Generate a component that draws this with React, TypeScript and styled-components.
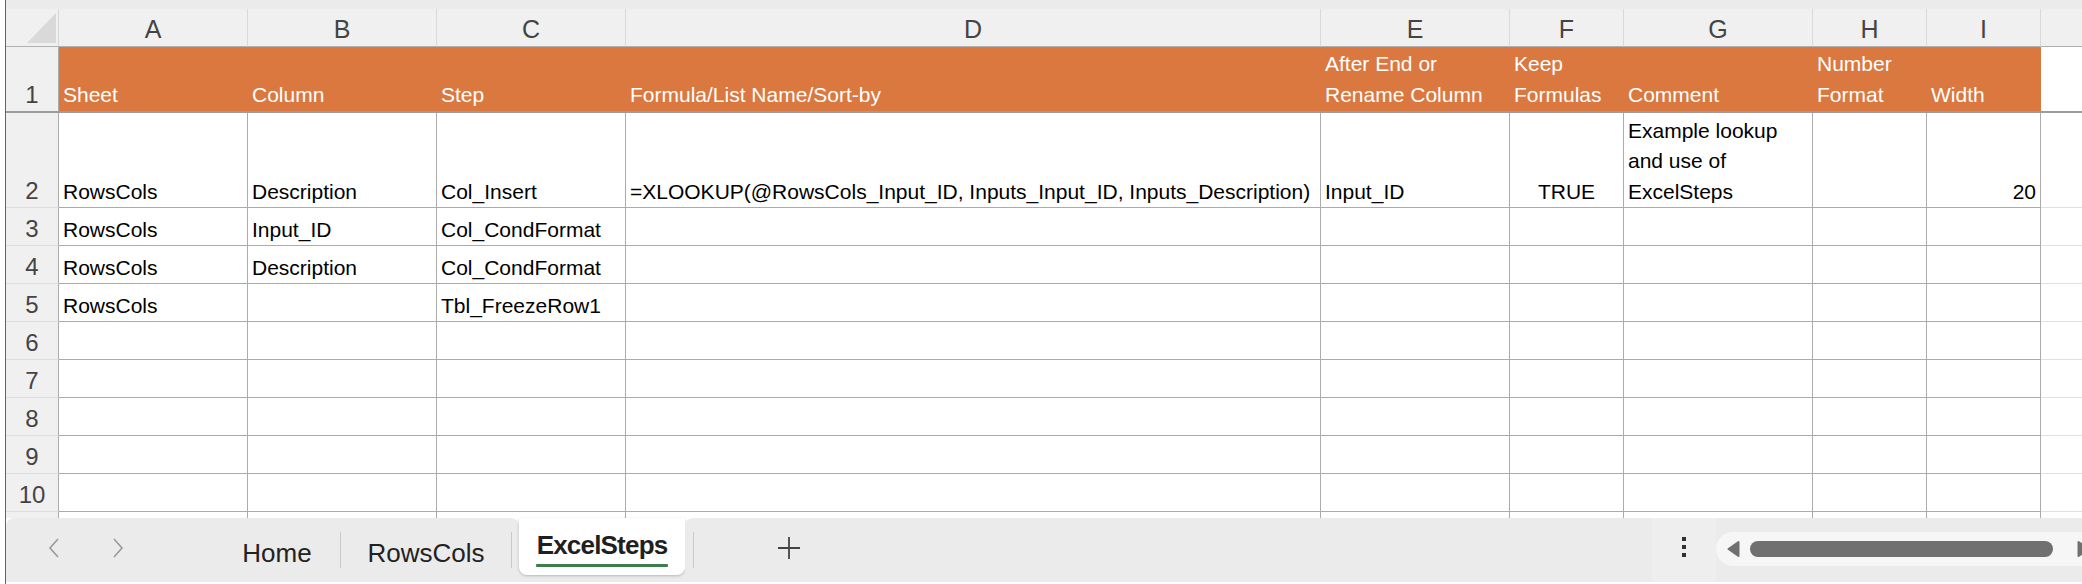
import React from 'react';
import styled, { createGlobalStyle } from 'styled-components';

const GlobalStyle = createGlobalStyle`
  *, *::before, *::after { box-sizing: border-box; }
  html, body { margin: 0; padding: 0; background: #ffffff; }
  body {
    width: 2082px;
    height: 584px;
    overflow: hidden;
    font-family: "Liberation Sans", Arial, sans-serif;
  }
`;

const COLS = '53px 189px 189px 189px 695px 189px 114px 189px 114px 114px 1fr';
const GRID = '#ababab';
const ORANGE = '#db7840';
const HEAD_BG = '#f0f0f0';

const Page = styled.div`
  display: flex;
  width: 2082px;
  height: 584px;
  overflow: hidden;
  background: #ffffff;
`;

const EdgeStrip = styled.div`
  flex: 0 0 6px;
  border-right: 1px solid #3b7d4a;
  background: #ffffff;
`;

const Workbook = styled.div`
  flex: 1;
  min-width: 0;
  display: flex;
  flex-direction: column;
`;

const TopBand = styled.div`
  height: 9px;
  background: #ebebeb;
`;

const GridRow = styled.div<{ $h: number }>`
  display: grid;
  grid-template-columns: ${COLS};
  height: ${(p) => p.$h}px;
`;

const FreezeLine = styled.div`
  height: 2px;
  background: #9c9c9c;
`;

const CornerCell = styled.div`
  background: ${HEAD_BG};
  border-right: 1px solid #d6d6d6;
  border-bottom: 1px solid #b0b0b0;
  display: flex;
  justify-content: flex-end;
  align-items: flex-end;
  padding: 0 2px 3px 0;
`;

const SelectAll = styled.div`
  width: 29px;
  height: 30px;
  background: #d9d9d9;
  clip-path: polygon(100% 0, 100% 100%, 0 100%);
`;

const ColHead = styled.div<{ $last?: boolean }>`
  background: ${HEAD_BG};
  border-bottom: 1px solid #b0b0b0;
  border-right: ${(p) => (p.$last ? 'none' : '1px solid #d9d9d9')};
  display: flex;
  justify-content: center;
  align-items: flex-start;
  padding-top: 4px;
  font: 25px/33px "Liberation Sans", Arial, sans-serif;
  color: #444444;
`;

const RowHead = styled.div<{ $plain?: boolean }>`
  background: ${HEAD_BG};
  border-right: 1px solid ${GRID};
  border-bottom: ${(p) => (p.$plain ? 'none' : '1px solid #dedede')};
  display: flex;
  justify-content: center;
  align-items: flex-end;
  padding-bottom: 1px;
  font: 24px/30px "Liberation Sans", Arial, sans-serif;
  color: #444444;
`;

type Align = 'left' | 'center' | 'right';
const flexAlign = (a?: Align) => (a === 'center' ? 'center' : a === 'right' ? 'flex-end' : 'flex-start');

const Cell = styled.div<{ $align?: Align; $open?: boolean }>`
  background: #ffffff;
  border-right: 1px solid ${GRID};
  border-bottom: ${(p) => (p.$open ? 'none' : `1px solid ${GRID}`)};
  display: flex;
  flex-direction: column;
  justify-content: flex-end;
  align-items: ${(p) => flexAlign(p.$align)};
  padding: 0 4px;
  font: 21px/30.5px "Liberation Sans", Arial, sans-serif;
  color: #000000;
  white-space: nowrap;
`;

const HeadCell = styled.div`
  background: ${ORANGE};
  display: flex;
  flex-direction: column;
  justify-content: flex-end;
  padding: 0 4px 1px;
  font: 21px/31px "Liberation Sans", Arial, sans-serif;
  color: #ffffff;
  white-space: nowrap;
`;

const FillerCell = styled.div<{ $border?: boolean }>`
  background: #ffffff;
  border-bottom: ${(p) => (p.$border ? '1px solid #e0e0e0' : 'none')};
`;

/* ---------- sheet tabs ---------- */

const TabBar = styled.div`
  display: flex;
  height: 64px;
  background: #ffffff;
`;

const LeftSection = styled.div`
  flex: 0 0 513px;
  display: flex;
  align-items: stretch;
  background: #ebebeb;
  border-radius: 8px 8px 0 0;
  padding-left: 28px;
`;

const NavButton = styled.div<{ $gap?: number }>`
  width: 40px;
  display: flex;
  align-items: center;
  justify-content: center;
  margin-left: ${(p) => p.$gap ?? 0}px;
  padding-bottom: 4px;
`;

const SheetTab = styled.div<{ $w: number; $gap?: number }>`
  width: ${(p) => p.$w}px;
  margin-left: ${(p) => p.$gap ?? 0}px;
  display: flex;
  justify-content: center;
  padding-top: 20px;
  font: 26px/30px "Liberation Sans", Arial, sans-serif;
  color: #222222;
  white-space: nowrap;
`;

const TabDivider = styled.div<{ $gap?: number }>`
  width: 1px;
  height: 36px;
  align-self: center;
  background: #c9c9c9;
  margin-left: ${(p) => p.$gap ?? 0}px;
`;

const ActiveWrap = styled.div`
  flex: 0 0 166px;
  background: #ebebeb;
  display: flex;
  align-items: flex-start;
`;

const ActiveTab = styled.div`
  width: 100%;
  height: 57px;
  background: #ffffff;
  border-radius: 0 0 8px 8px;
  box-shadow: 0 1px 3px rgba(0, 0, 0, 0.22);
  display: flex;
  flex-direction: column;
  align-items: center;
  padding-top: 12px;
`;

const ActiveLabel = styled.div`
  font: bold 26px/30px "Liberation Sans", Arial, sans-serif;
  letter-spacing: -0.8px;
  color: #1f1f1f;
  white-space: nowrap;
`;

const ActiveUnderline = styled.div`
  width: 132px;
  height: 3px;
  margin-top: 4px;
  background: #3d7d4c;
  border-radius: 1px;
`;

const RightSection = styled.div`
  flex: 1;
  min-width: 0;
  display: flex;
  align-items: stretch;
  background: #ebebeb;
  border-radius: 8px 0 0 0;
  padding-left: 8px;
  overflow: hidden;
`;

const AddButton = styled.div`
  width: 40px;
  margin-left: 75px;
  display: flex;
  align-items: center;
  justify-content: center;
  padding-bottom: 4px;
`;

const Spacer = styled.div`
  flex: 1;
`;

const MoreArea = styled.div`
  flex: 0 0 64px;
  background: #eeeeee;
  display: flex;
  flex-direction: column;
  align-items: center;
  justify-content: center;
  gap: 4px;
  padding-bottom: 6px;
`;

const Dot = styled.div`
  width: 4px;
  height: 4px;
  background: #303030;
`;

const ScrollArea = styled.div`
  flex: 0 0 366px;
  overflow: hidden;
  padding-top: 14px;
`;

const Track = styled.div`
  width: 420px;
  height: 34px;
  border-radius: 17px;
  background: #f6f6f6;
  display: flex;
  align-items: center;
  padding-left: 10px;
`;

const Thumb = styled.div`
  width: 303px;
  height: 16px;
  border-radius: 8px;
  background: #707070;
  margin: 0 24px 0 10px;
`;

/* ---------- data ---------- */

const colLetters = ['A', 'B', 'C', 'D', 'E', 'F', 'G', 'H', 'I'];

const headers: string[][] = [
  ['Sheet'],
  ['Column'],
  ['Step'],
  ['Formula/List Name/Sort-by'],
  ['After End or', 'Rename Column'],
  ['Keep', 'Formulas'],
  ['Comment'],
  ['Number', 'Format'],
  ['Width'],
];

type CellData = { lines: string[]; align?: Align };
const c = (text = '', align?: Align): CellData => ({ lines: text ? [text] : [], align });

const bodyRows: { n: number; h: number; cells: CellData[] }[] = [
  {
    n: 2,
    h: 95,
    cells: [
      c('RowsCols'),
      c('Description'),
      c('Col_Insert'),
      c('=XLOOKUP(@RowsCols_Input_ID, Inputs_Input_ID, Inputs_Description)'),
      c('Input_ID'),
      c('TRUE', 'center'),
      { lines: ['Example lookup', 'and use of', 'ExcelSteps'] },
      c(),
      c('20', 'right'),
    ],
  },
  { n: 3, h: 38, cells: [c('RowsCols'), c('Input_ID'), c('Col_CondFormat'), c(), c(), c(), c(), c(), c()] },
  { n: 4, h: 38, cells: [c('RowsCols'), c('Description'), c('Col_CondFormat'), c(), c(), c(), c(), c(), c()] },
  { n: 5, h: 38, cells: [c('RowsCols'), c(), c('Tbl_FreezeRow1'), c(), c(), c(), c(), c(), c()] },
  ...[6, 7, 8, 9, 10].map((n) => ({ n, h: 38, cells: Array.from({ length: 9 }, () => c()) })),
];

const ChevronLeft = () => (
  <svg width="12" height="20" viewBox="0 0 12 20">
    <polyline points="10,1 2,10 10,19" fill="none" stroke="#9a9a9a" strokeWidth="1.6" />
  </svg>
);

const ChevronRight = () => (
  <svg width="12" height="20" viewBox="0 0 12 20">
    <polyline points="2,1 10,10 2,19" fill="none" stroke="#9a9a9a" strokeWidth="1.6" />
  </svg>
);

const PlusIcon = () => (
  <svg width="24" height="24" viewBox="0 0 24 24">
    <path d="M12 1 V23 M1 12 H23" stroke="#444444" strokeWidth="1.8" fill="none" />
  </svg>
);

const ArrowLeft = () => (
  <svg width="14" height="18" viewBox="0 0 14 18">
    <path d="M12.5 2 L12.5 16 L2.5 9 Z" fill="#707070" stroke="#707070" strokeWidth="2" strokeLinejoin="round" />
  </svg>
);

const ArrowRight = () => (
  <svg width="14" height="18" viewBox="0 0 14 18">
    <path d="M1.5 2 L1.5 16 L11.5 9 Z" fill="#707070" stroke="#707070" strokeWidth="2" strokeLinejoin="round" />
  </svg>
);

export default function App() {
  return (
    <>
      <GlobalStyle />
      <Page>
        <EdgeStrip />
        <Workbook>
          <TopBand />
          <GridRow $h={38}>
            <CornerCell>
              <SelectAll />
            </CornerCell>
            {colLetters.map((l) => (
              <ColHead key={l}>{l}</ColHead>
            ))}
            <ColHead $last />
          </GridRow>
          <GridRow $h={64}>
            <RowHead $plain>1</RowHead>
            {headers.map((lines, i) => (
              <HeadCell key={i}>
                {lines.map((t) => (
                  <div key={t}>{t}</div>
                ))}
              </HeadCell>
            ))}
            <FillerCell />
          </GridRow>
          <FreezeLine />
          {bodyRows.map((row) => (
            <GridRow key={row.n} $h={row.h}>
              <RowHead>{row.n}</RowHead>
              {row.cells.map((cell, i) => (
                <Cell key={i} $align={cell.align}>
                  {cell.lines.map((t) => (
                    <div key={t}>{t}</div>
                  ))}
                </Cell>
              ))}
              <FillerCell $border />
            </GridRow>
          ))}
          <GridRow $h={6}>
            <RowHead $plain />
            {colLetters.map((l) => (
              <Cell key={l} $open />
            ))}
            <FillerCell />
          </GridRow>
          <TabBar>
            <LeftSection>
              <NavButton>
                <ChevronLeft />
              </NavButton>
              <NavButton $gap={24}>
                <ChevronRight />
              </NavButton>
              <SheetTab $w={126} $gap={76}>
                Home
              </SheetTab>
              <TabDivider />
              <SheetTab $w={170}>RowsCols</SheetTab>
              <TabDivider />
            </LeftSection>
            <ActiveWrap>
              <ActiveTab>
                <ActiveLabel>ExcelSteps</ActiveLabel>
                <ActiveUnderline />
              </ActiveTab>
            </ActiveWrap>
            <RightSection>
              <TabDivider />
              <AddButton>
                <PlusIcon />
              </AddButton>
              <Spacer />
              <MoreArea>
                <Dot />
                <Dot />
                <Dot />
              </MoreArea>
              <ScrollArea>
                <Track>
                  <ArrowLeft />
                  <Thumb />
                  <ArrowRight />
                </Track>
              </ScrollArea>
            </RightSection>
          </TabBar>
        </Workbook>
      </Page>
    </>
  );
}
